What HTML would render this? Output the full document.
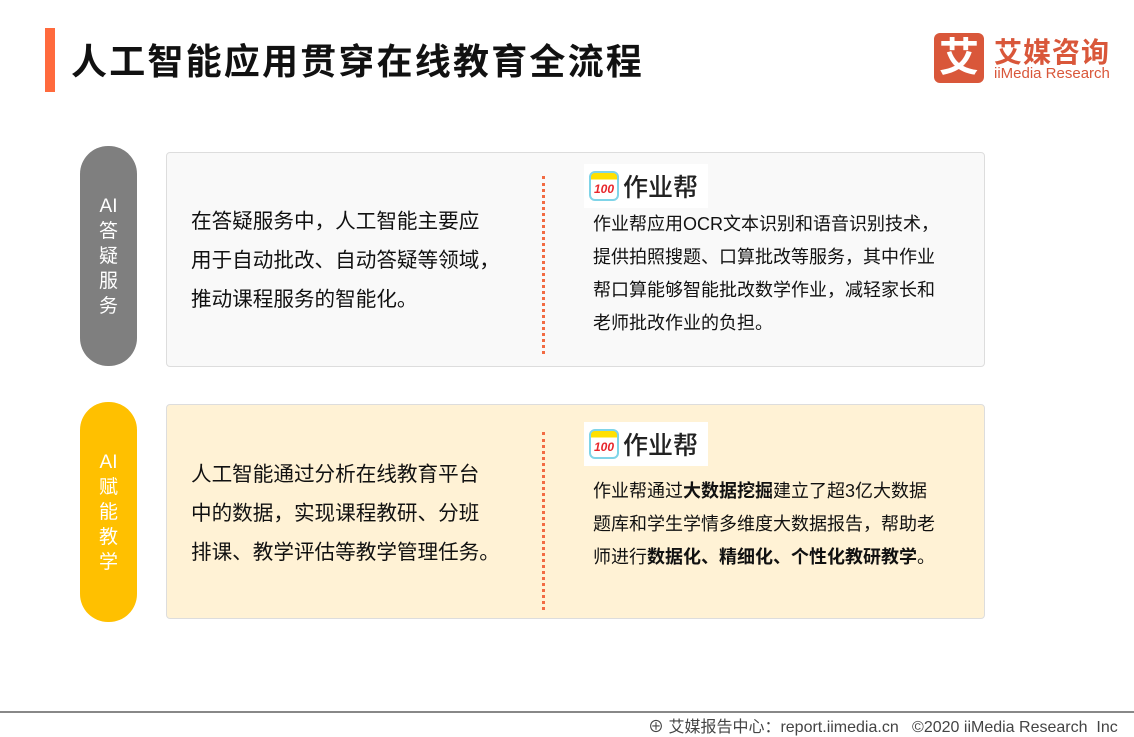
<!DOCTYPE html>
<html><head><meta charset="utf-8"><style>
*{margin:0;padding:0;box-sizing:border-box}
body{width:1134px;height:737px;background:#fff;font-family:"Liberation Sans","Noto Sans CJK SC",sans-serif;position:relative;overflow:hidden;color:#222}
.a{position:absolute}
.pill{position:absolute;left:80px;width:57px;border-radius:28px;color:#fff;font-size:19px;line-height:25px;text-align:center;display:flex;flex-direction:column;justify-content:center;align-items:center}
.card{position:absolute;left:166px;width:819px;height:215px;border:1px solid #ddd;border-radius:4px}
.lt{position:absolute;left:191px;font-size:20.6px;line-height:39px;color:#111}
.rt{position:absolute;left:593px;font-size:18px;line-height:33px;color:#111}
.dash{position:absolute;left:542px;width:3px;border-left:3px dotted #f26b43}
.logo{position:absolute;left:584px;width:124px;height:44px;background:#fff;display:flex;align-items:center}
.logo .ic{width:30px;height:30px;border-radius:6px;border:2px solid #7fd4e8;background:linear-gradient(#ffe000 0 25%,#fff 25%);margin:0 4px 0 5px;color:#e8262b;font-size:12px;font-weight:bold;font-style:italic;display:flex;align-items:flex-end;justify-content:center;padding-bottom:3px}
.logo span{font-size:25px;color:#222;font-weight:500}
b{font-weight:bold}
</style></head><body>
<div class="a" style="left:45px;top:28px;width:10px;height:64px;background:#ff6a3d"></div>
<div class="a" style="left:71px;top:33px;font-size:36px;font-weight:bold;color:#111;letter-spacing:2.2px">人工智能应用贯穿在线教育全流程</div>
<div class="a" style="left:934px;top:33px;width:50px;height:50px;background:#d9573a;border-radius:6px;color:#fff;font-size:40px;font-weight:bold;text-align:center;line-height:50px">艾</div>
<div class="a" style="left:994px;top:31px;font-size:28px;font-weight:bold;color:#d9573a;letter-spacing:1px">艾媒咨询</div>
<div class="a" style="left:994px;top:65px;font-size:15px;color:#d9573a">iiMedia Research</div>

<div class="pill" style="top:146px;height:220px;background:#7f7f7f">AI<br>答<br>疑<br>服<br>务</div>
<div class="card" style="top:152px;background:#f9f9f9"></div>
<div class="lt" style="top:202px">在答疑服务中，人工智能主要应<br>用于自动批改、自动答疑等领域，<br>推动课程服务的智能化。</div>
<div class="dash" style="top:176px;height:178px"></div>
<div class="logo" style="top:164px"><div class="ic">100</div><span>作业帮</span></div>
<div class="rt" style="top:208px">作业帮应用OCR文本识别和语音识别技术，<br>提供拍照搜题、口算批改等服务，其中作业<br>帮口算能够智能批改数学作业，减轻家长和<br>老师批改作业的负担。</div>

<div class="pill" style="top:402px;height:220px;background:#ffc000">AI<br>赋<br>能<br>教<br>学</div>
<div class="card" style="top:404px;background:#fff2d5"></div>
<div class="lt" style="top:455px">人工智能通过分析在线教育平台<br>中的数据，实现课程教研、分班<br>排课、教学评估等教学管理任务。</div>
<div class="dash" style="top:432px;height:178px"></div>
<div class="logo" style="top:422px"><div class="ic">100</div><span>作业帮</span></div>
<div class="rt" style="top:475px">作业帮通过<b>大数据挖掘</b>建立了超3亿大数据<br>题库和学生学情多维度大数据报告，帮助老<br>师进行<b>数据化、精细化、个性化教研教学</b>。</div>

<div class="a" style="left:0;top:711px;width:1134px;height:2px;background:#888"></div>
<div class="a" style="left:648px;top:713px;font-size:16px;color:#444;white-space:nowrap">⊕ 艾媒报告中心：report.iimedia.cn &nbsp; ©2020 iiMedia Research &nbsp;Inc</div>
</body></html>
